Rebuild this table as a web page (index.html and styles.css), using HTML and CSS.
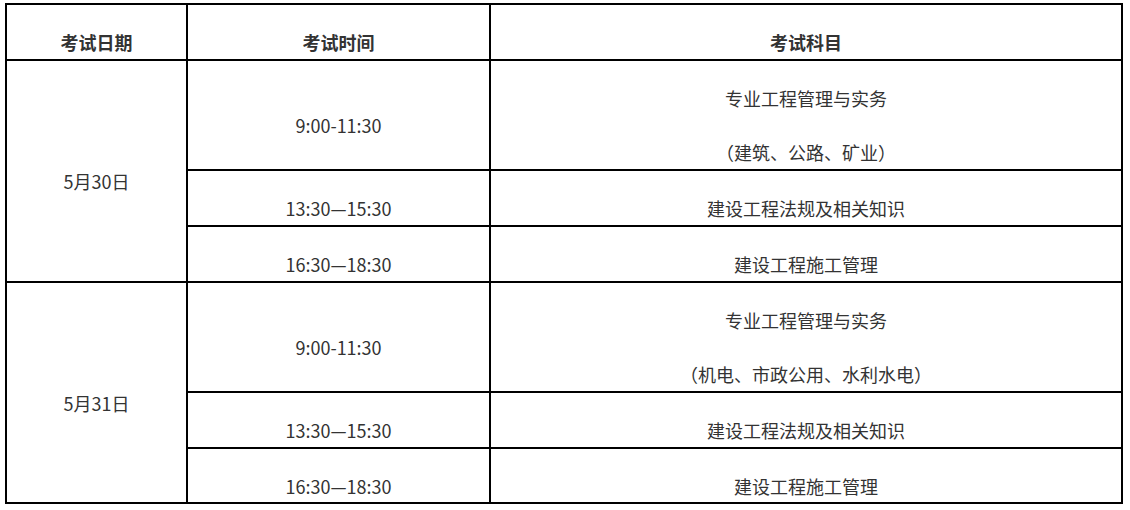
FILE: index.html
```html
<!DOCTYPE html>
<html lang="zh-CN">
<head>
<meta charset="utf-8">
<title>考试安排</title>
<link rel="stylesheet" href="styles.css">
</head>
<body>
<div class="page">
  <table class="schedule">
    <colgroup>
      <col class="col-date">
      <col class="col-time">
      <col class="col-subject">
    </colgroup>
    <thead>
      <tr>
        <th><p>考试日期</p></th>
        <th><p>考试时间</p></th>
        <th><p>考试科目</p></th>
      </tr>
    </thead>
    <tbody>
      <tr>
        <td rowspan="3"><p>5月30日</p></td>
        <td><p>9:00-11:30</p></td>
        <td><p>专业工程管理与实务</p><p>（建筑、公路、矿业）</p></td>
      </tr>
      <tr>
        <td><p>13:30—15:30</p></td>
        <td><p>建设工程法规及相关知识</p></td>
      </tr>
      <tr>
        <td><p>16:30—18:30</p></td>
        <td><p>建设工程施工管理</p></td>
      </tr>
      <tr>
        <td rowspan="3"><p>5月31日</p></td>
        <td><p>9:00-11:30</p></td>
        <td><p>专业工程管理与实务</p><p>（机电、市政公用、水利水电）</p></td>
      </tr>
      <tr>
        <td><p>13:30—15:30</p></td>
        <td><p>建设工程法规及相关知识</p></td>
      </tr>
      <tr class="last-row">
        <td><p>16:30—18:30</p></td>
        <td><p>建设工程施工管理</p></td>
      </tr>
    </tbody>
  </table>
</div>
</body>
</html>
```

FILE: styles.css
```css
html, body {
  margin: 0;
  padding: 0;
  background: #ffffff;
}

.page {
  padding: 3px 0 0 5px;
}

.schedule {
  border-collapse: collapse;
  table-layout: fixed;
  width: 1118px;
  font-family: "Noto Sans CJK SC", "Noto Sans", sans-serif;
  font-size: 18px;
  color: #333333;
}

.col-date { width: 181px; }
.col-time { width: 303px; }
.col-subject { width: 632px; }

.schedule th,
.schedule td {
  border: 2px solid #000000;
  padding: 0;
  text-align: center;
  vertical-align: middle;
}

.schedule th {
  font-weight: bold;
}

.schedule p {
  margin: 0;
  padding: 24px 0 3px;
  line-height: 27px;
  white-space: nowrap;
}

.schedule .last-row p {
  padding-bottom: 2px;
}
```
